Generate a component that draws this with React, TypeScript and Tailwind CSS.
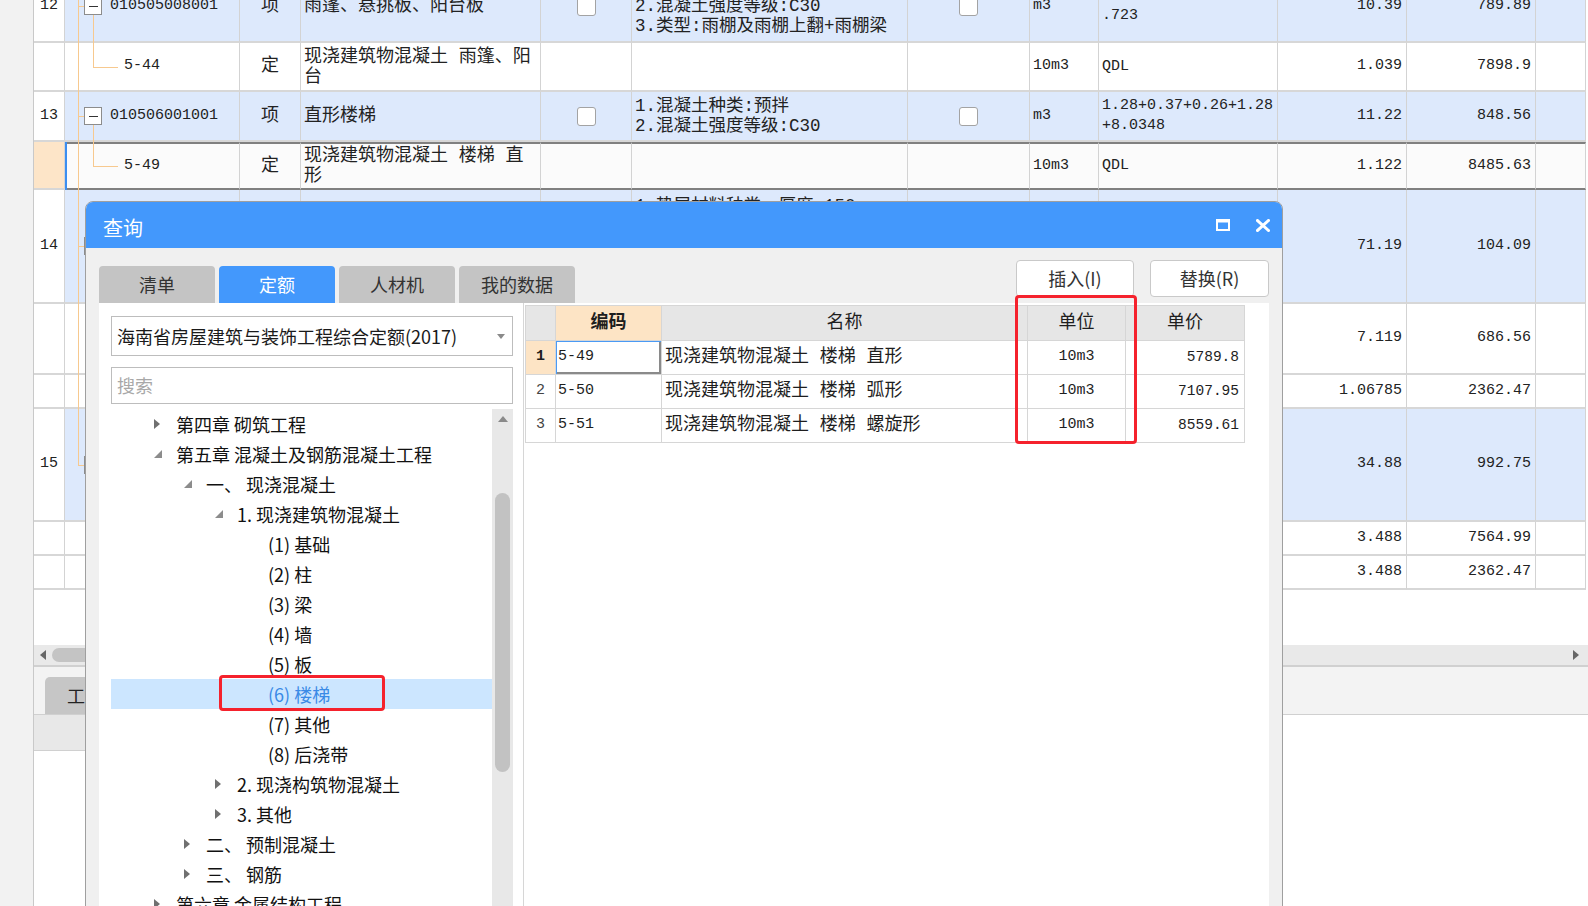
import type { ReactNode } from "react";

const CJK = "font-['Noto_Sans_CJK_SC','Liberation_Sans',sans-serif]";
const MONO = "font-['Liberation_Mono','Noto_Sans_CJK_SC',monospace]";
const COLS =
  "grid grid-cols-[31px_175px_61px_240px_91px_276px_122px_69px_179px_129px_129px_50px]";
const LINE = "bg-[#f7c98f]";

type Row = {
  h: string;
  num?: string;
  blue?: boolean;
  sel?: boolean;
  tree: "item" | "child" | "plain" | "last" | "none";
  code?: string;
  type?: string;
  name?: string[];
  chk?: boolean;
  desc?: string[];
  unit?: string;
  expr?: string[];
  qty?: string;
  price?: string;
};

const rows: Row[] = [
  {
    h: "h-[72px]",
    num: "12",
    blue: true,
    tree: "item",
    code: "010505008001",
    type: "项",
    name: ["雨篷、悬挑板、阳台板"],
    chk: true,
    desc: ["1.混凝土种类:预拌", "2.混凝土强度等级:C30", "3.类型:雨棚及雨棚上翻+雨棚梁"],
    unit: "m3",
    expr: ["3.036+0.76+0.55+5.9", ".723"],
    qty: "10.39",
    price: "789.89",
  },
  {
    h: "h-[49px]",
    tree: "child",
    code: "5-44",
    type: "定",
    name: ["现浇建筑物混凝土 雨篷、阳", "台"],
    unit: "10m3",
    expr: ["QDL"],
    qty: "1.039",
    price: "7898.9",
  },
  {
    h: "h-[50px]",
    num: "13",
    blue: true,
    tree: "item",
    code: "010506001001",
    type: "项",
    name: ["直形楼梯"],
    chk: true,
    desc: ["1.混凝土种类:预拌", "2.混凝土强度等级:C30"],
    unit: "m3",
    expr: ["1.28+0.37+0.26+1.28", "+8.0348"],
    qty: "11.22",
    price: "848.56",
  },
  {
    h: "h-[48px]",
    sel: true,
    tree: "child",
    code: "5-49",
    type: "定",
    name: ["现浇建筑物混凝土 楼梯 直", "形"],
    unit: "10m3",
    expr: ["QDL"],
    qty: "1.122",
    price: "8485.63",
  },
  {
    h: "h-[114px]",
    num: "14",
    blue: true,
    tree: "item",
    desc: ["1.垫层材料种类、厚度:150", "", "", "", ""],
    qty: "71.19",
    price: "104.09",
  },
  { h: "h-[71px]", tree: "plain", qty: "7.119", price: "686.56" },
  { h: "h-[34px]", tree: "plain", qty: "1.06785", price: "2362.47" },
  { h: "h-[113px]", num: "15", blue: true, tree: "last", qty: "34.88", price: "992.75" },
  { h: "h-[34px]", tree: "none", qty: "3.488", price: "7564.99" },
  { h: "h-[34px]", tree: "none", qty: "3.488", price: "2362.47" },
];

function Check() {
  return <span className="block h-[19px] w-[19px] rounded-[3px] border border-[#a3a3a3] bg-white" />;
}

function Lines({ items }: { items: string[] }) {
  return (
    <div className="flex flex-col leading-[20px]">
      {items.map((t, i) => (
        <span key={i} className="whitespace-pre">
          {t || "\u00a0"}
        </span>
      ))}
    </div>
  );
}

function Tree({ kind }: { kind: Row["tree"] }) {
  if (kind === "none") return null;
  return (
    <>
      {kind === "last" ? (
        <span className={`absolute left-[13px] -top-[2px] h-[calc(50%+2px)] w-px ${LINE}`} />
      ) : (
        <span className={`absolute left-[13px] -top-[2px] -bottom-[2px] w-px ${LINE}`} />
      )}
      {(kind === "item" || kind === "last") && (
        <>
          <span className={`absolute left-[13px] top-1/2 h-px w-[6px] ${LINE}`} />
          <span className="absolute left-[19px] top-1/2 -mt-[9px] flex h-[18px] w-[18px] items-center justify-center border border-[#8c8c8c] bg-white">
            <span className="h-px w-[9px] bg-[#333]" />
          </span>
        </>
      )}
      {kind === "item" && (
        <span className={`absolute left-[28px] top-[calc(50%+9px)] -bottom-[2px] w-px ${LINE}`} />
      )}
      {kind === "child" && (
        <>
          <span className={`absolute left-[28px] -top-[2px] h-[calc(50%+2px)] w-px ${LINE}`} />
          <span className={`absolute left-[28px] top-1/2 h-px w-[25px] ${LINE}`} />
        </>
      )}
    </>
  );
}

function BgRow({ r }: { r: Row }) {
  const edge = r.sel
    ? "border-r border-r-[#d3d3d3] border-t-2 border-t-[#808080] border-b-2 border-b-[#808080]"
    : "border-r border-r-[#d3d3d3] border-b-2 border-b-[#d7d7d7]";
  const fill = r.sel ? "bg-[#fbfbfb]" : r.blue ? "bg-[#dde9fc]" : "bg-white";
  const cell = `flex items-center overflow-hidden ${edge} ${fill}`;
  return (
    <div className={`${COLS} ${r.h} ${MONO} text-[#222]`}>
      <div
        className={`flex items-center justify-center border-r border-b-2 border-r-[#d3d3d3] border-b-[#d7d7d7] text-[15px] ${
          r.sel ? "bg-[#fde5c8]" : "bg-white"
        }`}
      >
        {r.num}
      </div>
      <div className={`relative flex items-center ${edge} ${fill}`}>
        <Tree kind={r.tree} />
        {r.sel && <span className="absolute left-0 -top-[2px] -bottom-[2px] w-[2px] bg-[#3b8ef0]" />}
        {r.code && (
          <span className={`text-[15px] ${r.tree === "item" ? "pl-[45px]" : "pl-[59px]"}`}>{r.code}</span>
        )}
      </div>
      <div className={`${cell} justify-center text-[18px]`}>{r.type}</div>
      <div className={`${cell} pl-[3px] text-[18px]`}>{r.name && <Lines items={r.name} />}</div>
      <div className={`${cell} justify-center`}>{r.chk && <Check />}</div>
      <div className={`${cell} pl-[3px] text-[17.5px]`}>{r.desc && <Lines items={r.desc} />}</div>
      <div className={`${cell} justify-center`}>{r.chk && <Check />}</div>
      <div className={`${cell} pl-[3px] text-[15px]`}>{r.unit}</div>
      <div className={`${cell} pl-[3px] text-[15px]`}>{r.expr && <Lines items={r.expr} />}</div>
      <div className={`${cell} justify-end pr-[4px] text-[15px]`}>{r.qty}</div>
      <div className={`${cell} justify-end pr-[4px] text-[15px]`}>{r.price}</div>
      <div className={cell} />
    </div>
  );
}

type Node = { l: number; a?: "c" | "e"; t: string; sel?: boolean };

const nodes: Node[] = [
  { l: 0, a: "c", t: "第四章 砌筑工程" },
  { l: 0, a: "e", t: "第五章 混凝土及钢筋混凝土工程" },
  { l: 1, a: "e", t: "一、 现浇混凝土" },
  { l: 2, a: "e", t: "1. 现浇建筑物混凝土" },
  { l: 3, t: "(1) 基础" },
  { l: 3, t: "(2) 柱" },
  { l: 3, t: "(3) 梁" },
  { l: 3, t: "(4) 墙" },
  { l: 3, t: "(5) 板" },
  { l: 3, t: "(6) 楼梯", sel: true },
  { l: 3, t: "(7) 其他" },
  { l: 3, t: "(8) 后浇带" },
  { l: 2, a: "c", t: "2. 现浇构筑物混凝土" },
  { l: 2, a: "c", t: "3. 其他" },
  { l: 1, a: "c", t: "二、 预制混凝土" },
  { l: 1, a: "c", t: "三、 钢筋" },
  { l: 0, a: "c", t: "第六章 金属结构工程" },
];

const LEVEL = ["pl-[43px]", "pl-[73px]", "pl-[104px]", "pl-[135px]"];

function TreeRow({ n }: { n: Node }) {
  return (
    <div className={`relative flex h-[30px] shrink-0 items-center ${LEVEL[n.l]} ${n.sel ? "bg-[#cce6ff]" : ""}`}>
      <span className="flex w-[22px] shrink-0 items-center">
        {n.a === "c" && (
          <svg width="6" height="10" viewBox="0 0 6 10">
            <polygon points="0,0 6,5 0,10" fill="#707070" />
          </svg>
        )}
        {n.a === "e" && (
          <svg width="8" height="8" viewBox="0 0 8 8">
            <polygon points="8,0 8,8 0,8" fill="#8c8c8c" />
          </svg>
        )}
      </span>
      <span className={`whitespace-pre text-[18px] leading-none ${n.sel ? "text-[#3a8ae6]" : "text-[#111]"}`}>
        {n.t}
      </span>
      {n.sel && (
        <span className="absolute left-[108px] -top-[4px] h-[36px] w-[166px] rounded-[4px] border-[3px] border-[#f5222d]" />
      )}
    </div>
  );
}

const results = [
  { n: "1", code: "5-49", name: "现浇建筑物混凝土 楼梯 直形", unit: "10m3", price: "5789.8" },
  { n: "2", code: "5-50", name: "现浇建筑物混凝土 楼梯 弧形", unit: "10m3", price: "7107.95" },
  { n: "3", code: "5-51", name: "现浇建筑物混凝土 楼梯 螺旋形", unit: "10m3", price: "8559.61" },
];

const TCOLS = "grid grid-cols-[30px_106px_366px_98px_119px]";
const TCELL = "flex items-center border-r border-b border-[#d6d6d6]";

function ResultTable() {
  return (
    <div className={`relative w-[720px] border-l border-t border-[#d6d6d6] ${MONO} text-[#1e1e1e]`}>
      <div className={`${TCOLS} h-[35px] text-[18px]`}>
        <div className={`${TCELL} bg-[#e6e6e6]`} />
        <div className={`${TCELL} justify-center bg-[#fde4c5] font-bold`}>编码</div>
        <div className={`${TCELL} justify-center bg-[#e6e6e6]`}>名称</div>
        <div className={`${TCELL} justify-center bg-[#e6e6e6]`}>单位</div>
        <div className={`${TCELL} justify-center bg-[#e6e6e6]`}>单价</div>
      </div>
      {results.map((r, i) => (
        <div key={r.n} className={`${TCOLS} h-[34px]`}>
          <div
            className={`${TCELL} justify-center text-[15px] ${i === 0 ? "bg-[#fde4c5] font-bold" : "bg-white text-[#444]"}`}
          >
            {r.n}
          </div>
          <div
            className={`${TCELL} pl-[2px] text-[15px] ${
              i === 0 ? "shadow-[inset_1px_1px_0_#4a9af5,inset_-2px_-2px_0_#8a8a8a]" : ""
            }`}
          >
            {r.code}
          </div>
          <div className={`${TCELL} whitespace-pre pl-[3px] text-[18px]`}>{r.name}</div>
          <div className={`${TCELL} justify-center text-[15px]`}>{r.unit}</div>
          <div className={`${TCELL} justify-end pr-[5px] text-[14.5px]`}>{r.price}</div>
        </div>
      ))}
      <div className="absolute left-[489px] -top-[11px] h-[149px] w-[122px] rounded-[4px] border-[3px] border-[#f5222d]" />
    </div>
  );
}

function Dialog() {
  const tabs = [
    { t: "清单" },
    { t: "定额", on: true },
    { t: "人材机" },
    { t: "我的数据" },
  ];
  return (
    <div
      className={`absolute left-[85px] top-[201px] flex h-[720px] w-[1198px] flex-col overflow-hidden rounded-t-[8px] border border-[#9f9f9f] bg-[#f0f0f0] ${CJK}`}
    >
      <div className="flex h-[46px] shrink-0 items-center bg-[#4398fc] pl-[17px] pr-[12px]">
        <span className="pt-[5px] text-[20px] text-white">查询</span>
        <div className="ml-auto flex items-center gap-[26px]">
          <svg width="14" height="12" viewBox="0 0 14 12">
            <rect x="1" y="1.5" width="12" height="9.5" fill="none" stroke="#fff" strokeWidth="2" />
            <rect x="0" y="0" width="14" height="3.5" fill="#fff" />
          </svg>
          <svg width="14" height="13" viewBox="0 0 14 13">
            <path d="M1.5 1.5 L12.5 11.5 M12.5 1.5 L1.5 11.5" stroke="#fff" strokeWidth="3" strokeLinecap="square" />
          </svg>
        </div>
      </div>
      <div className="flex flex-1 flex-col pl-[13px] pr-[13px]">
        <div className="flex h-[55px] shrink-0 items-end justify-between">
          <div className="flex gap-[4px]">
            {tabs.map((t) => (
              <div
                key={t.t}
                className={`flex h-[37px] w-[116px] items-center justify-center rounded-t-[4px] text-[18px] ${
                  t.on ? "bg-[#4398fc] text-white" : "bg-[#c4c4c4] text-[#333]"
                }`}
              >
                {t.t}
              </div>
            ))}
          </div>
          <div className="mb-[6px] flex gap-[16px]">
            <div className="flex h-[37px] w-[118px] items-center justify-center rounded-[4px] border border-[#c9c9c9] bg-white text-[18px] text-[#333]">
              插入(I)
            </div>
            <div className="flex h-[37px] w-[119px] items-center justify-center rounded-[4px] border border-[#c9c9c9] bg-white text-[18px] text-[#333]">
              替换(R)
            </div>
          </div>
        </div>
        <div className="flex flex-1 bg-white">
          <div className="flex w-[424px] shrink-0 flex-col pl-[12px] pr-[10px] pt-[13px]">
            <div className="flex h-[40px] shrink-0 items-center border border-[#bdbdbd] pl-[5px] pr-[7px] text-[18px] text-[#1a1a1a]">
              <span>海南省房屋建筑与装饰工程综合定额(2017)</span>
              <svg className="ml-auto" width="8" height="5" viewBox="0 0 8 5">
                <polygon points="0,0 8,0 4,5" fill="#8a8a8a" />
              </svg>
            </div>
            <div className="mt-[11px] flex h-[37px] shrink-0 items-center border border-[#bdbdbd] pl-[5px] text-[18px] text-[#a8a8a8]">
              搜索
            </div>
            <div className="mt-[5px] flex flex-1">
              <div className="flex flex-1 flex-col">
                {nodes.map((n) => (
                  <TreeRow key={n.t} n={n} />
                ))}
              </div>
              <div className="flex w-[21px] shrink-0 flex-col items-center bg-[#e8e8e8]">
                <svg className="mt-[7px]" width="10" height="6" viewBox="0 0 10 6">
                  <polygon points="0,6 10,6 5,0" fill="#8a8a8a" />
                </svg>
                <div className="mt-[71px] h-[279px] w-[15px] rounded-full bg-[#c2c2c2]" />
              </div>
            </div>
          </div>
          <div className="flex-1 border-l border-[#d6d6d6] pl-[1px] pt-[2px]">
            <ResultTable />
          </div>
        </div>
      </div>
    </div>
  );
}

export default function App() {
  return (
    <div className={`relative flex h-[906px] w-[1588px] overflow-hidden bg-white ${CJK}`}>
      <div className="w-[33px] shrink-0 bg-[#f2f2f2]" />
      <div className="flex min-w-0 flex-1 flex-col border-l border-[#c9c9c9]">
        <div className="-mt-[29px] flex flex-col">
          {rows.map((r, i) => (
            <BgRow key={i} r={r} />
          ))}
        </div>
        <div className="h-[55px] shrink-0" />
        <div className="flex h-[22px] shrink-0 items-center border-b-2 border-[#d0d0d0] bg-[#e9e9e9]">
          <svg className="ml-[6px]" width="6" height="10" viewBox="0 0 6 10">
            <polygon points="6,0 0,5 6,10" fill="#666" />
          </svg>
          <div className="ml-[6px] h-[14px] w-[400px] rounded-full bg-[#c4c4c4]" />
          <svg className="ml-auto mr-[9px]" width="6" height="10" viewBox="0 0 6 10">
            <polygon points="0,0 6,5 0,10" fill="#666" />
          </svg>
        </div>
        <div className="flex h-[48px] shrink-0 items-end border-b border-[#d0d0d0] bg-[#f3f3f3] pl-[11px]">
          <div className="flex h-[37px] w-[140px] items-center rounded-tl-[5px] bg-[#c6c6c6] pl-[22px] text-[18px] text-[#222]">
            工料机显示
          </div>
        </div>
        <div className="flex h-[36px] shrink-0">
          <div className="w-[300px] border-b border-[#d0d0d0] bg-[#e8e8e8]" />
          <div className="flex-1 bg-white" />
        </div>
      </div>
      <Dialog />
    </div>
  );
}
